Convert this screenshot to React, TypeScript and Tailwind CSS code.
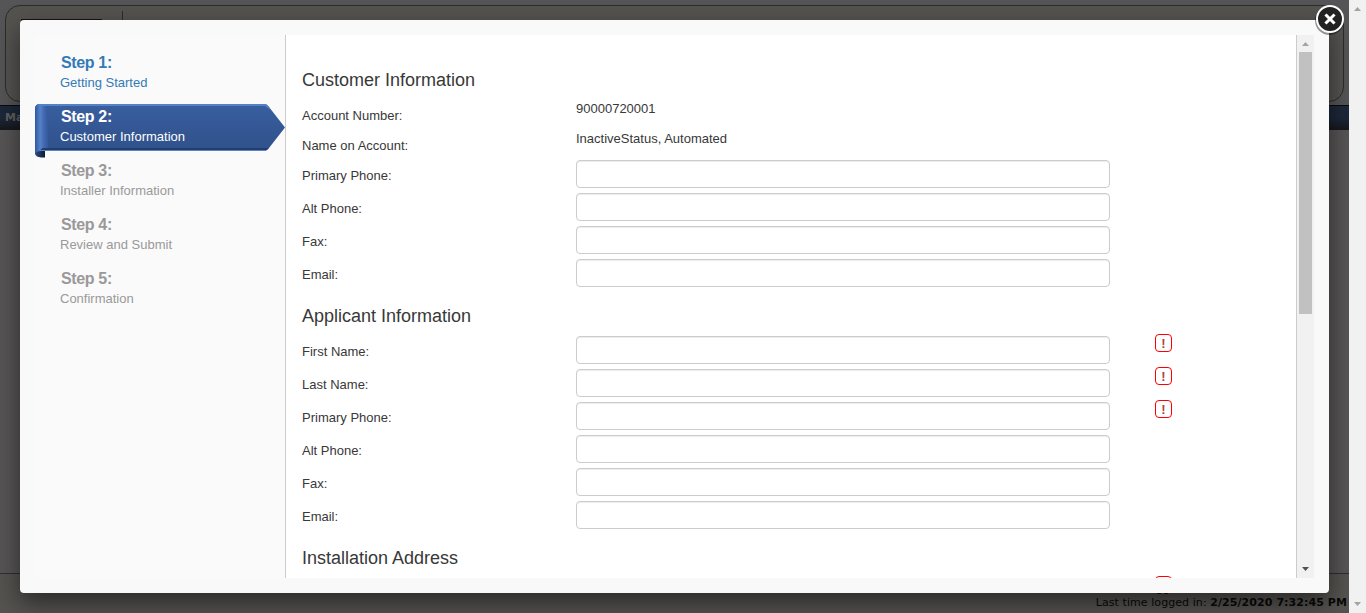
import React from "react";

const steps = [
  { title: "Step 1:", label: "Getting Started", state: "done" },
  { title: "Step 2:", label: "Customer Information", state: "active" },
  { title: "Step 3:", label: "Installer Information", state: "todo" },
  { title: "Step 4:", label: "Review and Submit", state: "todo" },
  { title: "Step 5:", label: "Confirmation", state: "todo" },
];

const stepColor: Record<string, string> = {
  done: "text-[#337ab7]",
  active: "text-white",
  todo: "text-[#999]",
};

type FieldProps = { label?: string; value?: string; required?: boolean };

function Field({ label, value, required }: FieldProps) {
  return (
    <div className={value ? "flex h-[30px]" : "flex h-[33px]"}>
      <label className="w-[274px] shrink-0 pt-[6px] leading-[20px]">{label}</label>
      {value ? (
        <span className="leading-[18px]">{value}</span>
      ) : (
        <input
          aria-label={label}
          className="h-[28px] w-[534px] shrink-0 rounded-[4px] border border-[#ccc] bg-white px-2 shadow-[inset_0_1px_1px_rgba(0,0,0,0.075)] outline-none"
        />
      )}
      {required && (
        <span className="-mt-[2px] ml-[45px] flex h-[18px] w-[17px] justify-center rounded-[4px] border border-[#f00] text-[13px] font-bold leading-[18px] text-[#a94442]">
          !
        </span>
      )}
    </div>
  );
}

function Section({ title, children }: { title: string; children: React.ReactNode }) {
  return (
    <section className="mb-[14px]">
      <h2 className="mb-[10px] text-[18px] leading-[20px]">{title}</h2>
      {children}
    </section>
  );
}

function Ribbon() {
  return (
    <svg className="absolute left-0 top-0" width="250" height="54" viewBox="0 0 250 54">
      <defs>
        <linearGradient id="face" x1="0" y1="0" x2="0" y2="1">
          <stop offset="0" stopColor="#395f9f" />
          <stop offset="1" stopColor="#2f508a" />
        </linearGradient>
        <linearGradient id="fold" x1="0" y1="0" x2="1" y2="0">
          <stop offset="0" stopColor="#2f579c" />
          <stop offset="0.4" stopColor="#5482ca" />
          <stop offset="0.7" stopColor="#4069b0" />
          <stop offset="1" stopColor="#36599a" />
        </linearGradient>
        <linearGradient id="curl" x1="0" y1="0" x2="1" y2="0">
          <stop offset="0" stopColor="#2d4d85" />
          <stop offset="1" stopColor="#0d1930" />
        </linearGradient>
      </defs>
      <path d="M0 47H10V53.5H6Q1 53 0 50Z" fill="url(#curl)" />
      <path d="M5 0H230Q232 0 234 3L250 23.5L234 44Q232 47 230 47H6Q1 47 0 50V5Q0 0 5 0Z" fill="url(#face)" />
      <path d="M5 0H13V47H6Q1 47 0 50V5Q0 0 5 0Z" fill="url(#fold)" />
      <path d="M4 0H230Q232 0 234 3L236 6L230 2H3Z" fill="#5681c8" />
      <path d="M8 44H234L231 46H5Z" fill="#223e70" />
      <path d="M5 46.5H231" stroke="#5b83c5" />
    </svg>
  );
}

function Sidebar() {
  return (
    <nav className="w-[251px] shrink-0 border-r border-[#ccc] bg-[#fafafa] pt-[15px]">
      {steps.map((s) => (
        <div key={s.title} className={"relative h-[54px] pl-[25px] pt-[3px] " + stepColor[s.state]}>
          {s.state === "active" && <Ribbon />}
          <div className="relative pl-[1px] text-[16px] font-bold leading-[20px] tracking-[-0.35px]">{s.title}</div>
          <div className="relative leading-[20px]">{s.label}</div>
        </div>
      ))}
    </nav>
  );
}

function InnerScrollbar() {
  return (
    <div className="flex w-[18px] shrink-0 flex-col items-center border-l border-[#ccc] bg-[#f1f1f1]">
      <svg width="17" height="17" viewBox="0 0 17 17" className="shrink-0">
        <path d="M5 11L8.5 7L12 11Z" fill="#a3a3a3" />
      </svg>
      <div className="h-[262px] w-[13px] bg-[#c1c1c1]" />
      <svg width="17" height="17" viewBox="0 0 17 17" className="mt-auto shrink-0">
        <path d="M5 6L8.5 10L12 6Z" fill="#505050" />
      </svg>
    </div>
  );
}

function PageBehind() {
  return (
    <div className="flex h-[613px] w-full font-['DejaVu_Sans',sans-serif]">
      <div className="flex min-w-0 flex-1 flex-col bg-[#575456]">
        <div className="h-[105px] shrink-0 bg-[#555456] px-[5px] pt-[5px]">
          <div className="flex h-[97px] rounded-[15px] border border-[#2d2c2c] bg-[#555350] pl-[15px]">
            <div className="mt-[13px] h-[2px] w-[81px] bg-[#191216]" />
            <div className="ml-[20px] mt-[5px] h-[80px] w-px bg-[#2b2a2a]" />
          </div>
        </div>
        <div className="h-[25px] shrink-0 border-t border-[#08090c] bg-linear-to-b from-[#1b2739] via-[#1b2739] to-[#17171b] pl-[5px] text-[11px] font-bold leading-[24px] text-[#60605f]">
          Main
        </div>
        <div className="flex-1" />
        <div className="h-[40px] shrink-0 border-t border-[#302e2e] bg-[#555350] pr-[2px] text-right text-[11px] leading-[14px] text-[#080808]">
          <div className="mr-[130px] mt-[8px]">Logged in as:</div>
          <div className="tracking-[0.07px]">
            Last time logged in: <b>2/25/2020 7:32:45 PM</b>
          </div>
        </div>
      </div>
      <div className="flex w-[17px] shrink-0 flex-col justify-between bg-[#f1f1f1]">
        <svg width="17" height="17" viewBox="0 0 17 17">
          <path d="M5 11L8.5 7L12 11Z" fill="#a3a3a3" />
        </svg>
        <svg width="17" height="17" viewBox="0 0 17 17">
          <path d="M5 6L8.5 10L12 6Z" fill="#a3a3a3" />
        </svg>
      </div>
    </div>
  );
}

export default function App() {
  return (
    <div className="relative h-[613px] w-[1366px] overflow-hidden text-[13px] text-[#383838]">
      <PageBehind />
      <div className="absolute inset-y-0 left-0 w-[1349px] overflow-hidden">
        <div className="absolute left-[20px] top-[20px] flex h-[573px] w-[1309px] rounded-[4px] bg-[#f9f9f9] p-[15px] font-['Liberation_Sans',sans-serif] shadow-[0_10px_25px_rgba(0,0,0,0.5)]">
          <Sidebar />
          <main className="min-w-0 flex-1 overflow-hidden bg-white pl-[16px] pt-[35px]">
            <Section title="Customer Information">
              <Field label="Account Number:" value="90000720001" />
              <Field label="Name on Account:" value="InactiveStatus, Automated" />
              <Field label="Primary Phone:" />
              <Field label="Alt Phone:" />
              <Field label="Fax:" />
              <Field label="Email:" />
            </Section>
            <Section title="Applicant Information">
              <Field label="First Name:" required />
              <Field label="Last Name:" required />
              <Field label="Primary Phone:" required />
              <Field label="Alt Phone:" />
              <Field label="Fax:" />
              <Field label="Email:" />
            </Section>
            <Section title="Installation Address">
              <Field required />
            </Section>
          </main>
          <InnerScrollbar />
        </div>
        <svg className="absolute left-[1311px] top-[1px]" width="38" height="38" viewBox="0 0 38 38">
          <circle cx="18.5" cy="19.5" r="14.5" fill="#000" opacity="0.4" />
          <circle cx="19" cy="18" r="13" fill="#222" stroke="#fff" strokeWidth="2" />
          <path d="M15.5 14.5L22.5 21.5M22.5 14.5L15.5 21.5" stroke="#fff" strokeWidth="3" strokeLinecap="square" />
        </svg>
      </div>
    </div>
  );
}
